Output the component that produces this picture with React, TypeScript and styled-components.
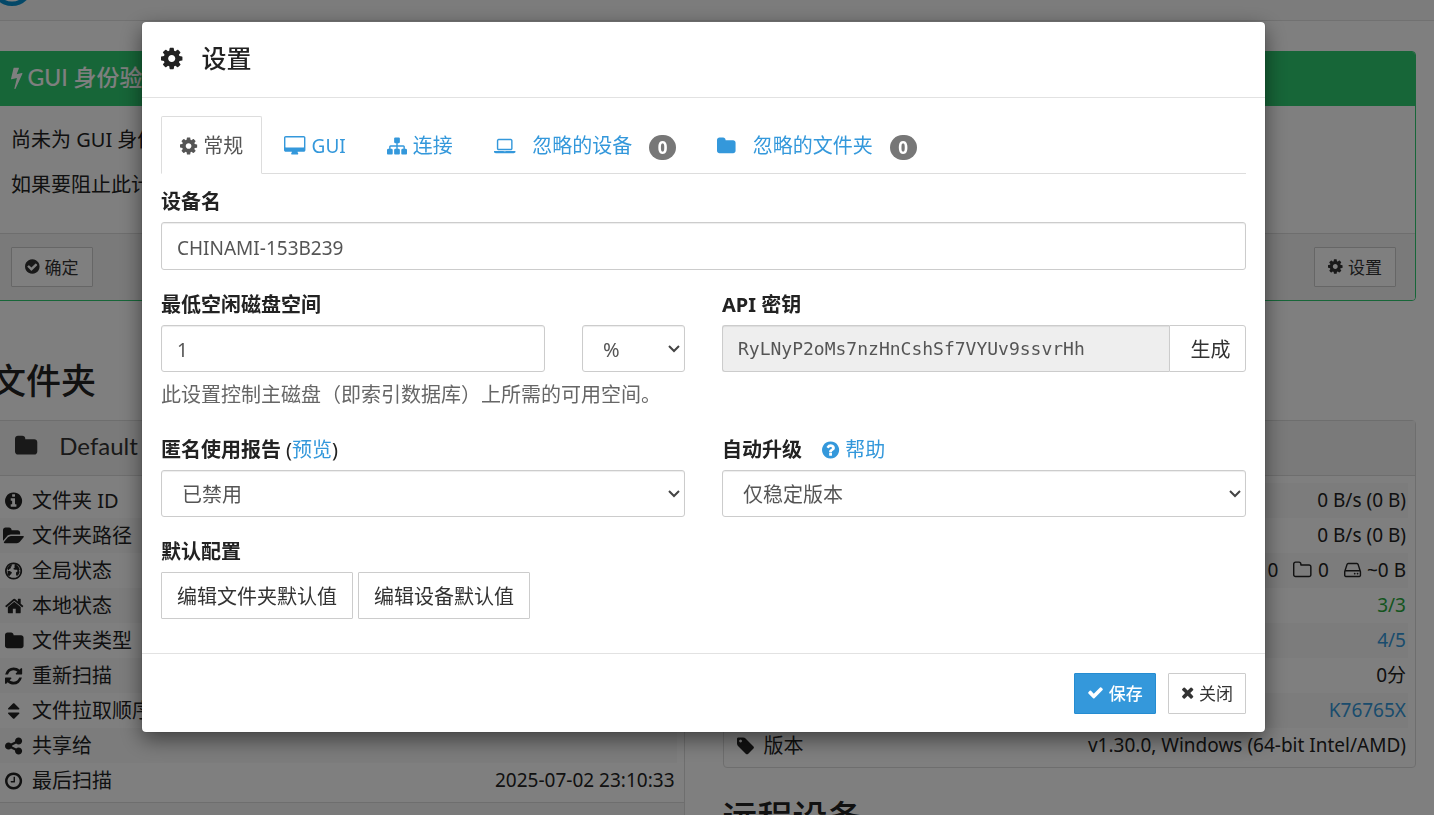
import React from "react";
import styled, { createGlobalStyle } from "styled-components";

const sans = `"Noto Sans", "Noto Sans CJK SC", sans-serif`;
const display = `"Lato", "Noto Sans CJK SC", sans-serif`;

const Global = createGlobalStyle`
  *, *::before, *::after { box-sizing: border-box; }
  html, body { margin: 0; height: 100%; overflow: hidden; }
  body { font: 20px/28px ${sans}; color: #222; background: #fff; }
  h1, h2, h3, p { margin: 0; }
  button, input, select { font-family: inherit; margin: 0; }
`;

/* ---------- icons: y-up glyph outlines on a 1792-unit em ---------- */
const disc = "M1536 640q0 -209 -103 -385.5t-279.5 -279.5t-385.5 -103t-385.5 103t-279.5 279.5t-103 385.5t103 385.5t279.5 279.5t385.5 103t385.5 -103t279.5 -279.5t103 -385.5z";
const folderShape = "M1664 928v-704q0 -92 -66 -158t-158 -66h-1216q-92 0 -158 66t-66 158v960q0 92 66 158t158 66h320q92 0 158 -66t66 -158v-32h672q92 0 158 -66t66 -158z";
const glyphs = {
  cog: [1536, "M1024 640q0 -106 -75 -181t-181 -75t-181 75t-75 181t75 181t181 75t181 -75t75 -181zM1536 749v-222q0 -12 -8 -23t-20 -13l-185 -28q-19 -54 -39 -91q35 -50 107 -138q10 -12 10 -25t-9 -23q-27 -37 -99 -108t-94 -71q-12 0 -26 9l-138 108q-44 -23 -91 -38q-16 -136 -29 -186q-7 -28 -36 -28h-222q-14 0 -24.5 8.5t-11.5 21.5l-28 184q-49 16 -90 37l-141 -107q-10 -9 -25 -9q-14 0 -25 11q-126 114 -165 168q-7 10 -7 23q0 12 8 23q15 21 51 66.5t54 70.5q-27 50 -41 99l-183 27q-13 2 -21 12.5t-8 23.5v222q0 12 8 23t19 13l186 28q14 46 39 92q-40 57 -107 138q-10 12 -10 24q0 10 9 23q26 36 98.5 107.5t94.5 71.5q13 0 26 -10l138 -107q44 23 91 38q16 136 29 186q7 28 36 28h222q14 0 24.5 -8.5t11.5 -21.5l28 -184q49 -16 90 -37l142 107q9 9 24 9q13 0 25 -10q129 -119 165 -170q7 -8 7 -22q0 -12 -8 -23q-15 -21 -51 -66.5t-54 -70.5q26 -50 41 -98l183 -28q13 -2 21 -12.5t8 -23.5z"],
  check: [1792, "M1671 970q0 -40 -28 -68l-724 -724l-136 -136q-28 -28 -68 -28t-68 28l-136 136l-362 362q-28 28 -28 68t28 68l136 136q28 28 68 28t68 -28l294 -295l656 657q28 28 68 28t68 -28l136 -136q28 -28 28 -68z"],
  times: [1408, "M1298 214q0 -40 -28 -68l-136 -136q-28 -28 -68 -28t-68 28l-294 294l-294 -294q-28 -28 -68 -28t-68 28l-136 136q-28 28 -28 68t28 68l294 294l-294 294q-28 28 -28 68t28 68l136 136q28 28 68 28t68 -28l294 -294l294 294q28 28 68 28t68 -28l136 -136q28 -28 28 -68t-28 -68l-294 -294l294 -294q28 -28 28 -68z"],
  folder: [1664, folderShape],
  folderOutline: [1664, "M1536 224v704q0 40 -28 68t-68 28h-704q-40 0 -68 28t-28 68v64q0 40 -28 68t-68 28h-320q-40 0 -68 -28t-28 -68v-960q0 -40 28 -68t68 -28h1216q40 0 68 28t28 68z" + folderShape],
  folderOpen: [1920, "M1879 584q0 -31 -31 -66l-336 -396q-43 -51 -120.5 -86.5t-143.5 -35.5h-1088q-34 0 -60.5 13t-26.5 43q0 31 31 66l336 396q43 51 120.5 86.5t143.5 35.5h1088q34 0 60.5 -13t26.5 -43zM1536 928v-160h-832q-94 0 -197 -47.5t-164 -119.5l-337 -396l-5 -6q0 4 -0.5 12.5t-0.5 12.5v960q0 92 66 158t158 66h320q92 0 158 -66t66 -158v-32h544q92 0 158 -66t66 -158z"],
  home: [1664, "M1408 544v-480q0 -26 -19 -45t-45 -19h-384v384h-256v-384h-384q-26 0 -45 19t-19 45v480q0 1 0.5 3t0.5 3l575 474l575 -474q1 -2 1 -6zM1631 613l-62 -74q-8 -9 -21 -11h-3q-13 0 -21 7l-692 577l-692 -577q-12 -8 -24 -7q-13 2 -21 11l-62 74q-8 10 -7 23.5t11 21.5l719 599q32 26 76 26t76 -26l244 -204v195q0 14 9 23t23 9h192q14 0 23 -9t9 -23v-408l219 -182q10 -8 11 -21.5t-7 -23.5z"],
  refresh: [1536, "M1511 480q0 -5 -1 -7q-64 -268 -268 -434.5t-478 -166.5q-146 0 -282.5 55t-243.5 157l-129 -129q-19 -19 -45 -19t-45 19t-19 45v448q0 26 19 45t45 19h448q26 0 45 -19t19 -45t-19 -45l-137 -137q71 -66 161 -102t187 -36q134 0 250 65t186 179q11 17 53 117q8 23 30 23h192q13 0 22.5 -9.5t9.5 -22.5zM1536 1280v-448q0 -26 -19 -45t-45 -19h-448q-26 0 -45 19t-19 45t19 45l138 138q-148 137 -349 137q-134 0 -250 -65t-186 -179q-11 -17 -53 -117q-8 -23 -30 -23h-199q-13 0 -22.5 9.5t-9.5 22.5v7q65 268 270 434.5t480 166.5q146 0 284 -55.5t245 -156.5l130 129q19 19 45 19t45 -19t19 -45z"],
  sort: [1024, "M1024 448q0 -26 -19 -45l-448 -448q-19 -19 -45 -19t-45 19l-448 448q-19 19 -19 45t19 45t45 19h896q26 0 45 -19t19 -45zM1024 832q0 -26 -19 -45t-45 -19h-896q-26 0 -45 19t-19 45t19 45l448 448q19 19 45 19t45 -19l448 -448q19 -19 19 -45z"],
  share: [1536, "M1216 512q133 0 226.5 -93.5t93.5 -226.5t-93.5 -226.5t-226.5 -93.5t-226.5 93.5t-93.5 226.5q0 12 2 34l-360 180q-92 -86 -218 -86q-133 0 -226.5 93.5t-93.5 226.5t93.5 226.5t226.5 93.5q126 0 218 -86l360 180q-2 22 -2 34q0 133 93.5 226.5t226.5 93.5t226.5 -93.5t93.5 -226.5t-93.5 -226.5t-226.5 -93.5q-126 0 -218 86l-360 -180q2 -22 2 -34t-2 -34l360 -180q92 86 218 86z"],
  clock: [1536, "M896 992v-448q0 -14 -9 -23t-23 -9h-320q-14 0 -23 9t-9 23v64q0 14 9 23t23 9h224v352q0 14 9 23t23 9h64q14 0 23 -9t9 -23zM1312 640q0 148 -73 273t-198 198t-273 73t-273 -73t-198 -198t-73 -273t73 -273t198 -198t273 -73t273 73t198 198t73 273z" + disc],
  info: [1536, "M1024 160v160q0 14 -9 23t-23 9h-96v512q0 14 -9 23t-23 9h-320q-14 0 -23 -9t-9 -23v-160q0 -14 9 -23t23 -9h96v-320h-96q-14 0 -23 -9t-9 -23v-160q0 -14 9 -23t23 -9h448q14 0 23 9t9 23zM896 1056v160q0 14 -9 23t-23 9h-192q-14 0 -23 -9t-9 -23v-160q0 -14 9 -23t23 -9h192q14 0 23 9t9 23z" + disc],
  checkCircle: [1536, "M1284 802q0 28 -18 46l-91 90q-19 19 -45 19t-45 -19l-408 -407l-226 226q-19 19 -45 19t-45 -19l-91 -90q-18 -18 -18 -46q0 -27 18 -45l362 -362q19 -19 45 -19q27 0 46 19l543 543q18 18 18 45z" + disc],
  question: [1536, "M896 160v192q0 14 -9 23t-23 9h-192q-14 0 -23 -9t-9 -23v-192q0 -14 9 -23t23 -9h192q14 0 23 9t9 23zM1152 832q0 88 -55.5 163t-138.5 116t-170 41q-243 0 -371 -213q-15 -24 8 -42l132 -100q7 -6 19 -6q16 0 25 12q53 68 86 92q34 24 86 24q48 0 85.5 -26t37.5 -59q0 -38 -20 -61t-68 -45q-63 -28 -115.5 -86.5t-52.5 -125.5v-36q0 -14 9 -23t23 -9h192q14 0 23 9t9 23q0 19 21.5 49.5t54.5 49.5q32 18 49 28.5t46 35t44.5 48t28 60.5t12.5 81z" + disc],
  globe: [1536, "M1376 640q0 165 -81.500 305t-221.500 222t-305 81.500t-305 -81.500t-221.500 -222t-81.500 -305t81.500 -305t221.500 -222t305 -81.500t305 81.500t221.500 222t81.500 305z" + disc + "M700 1240L560 1180L640 1080L500 1010L540 900L400 830L300 700L250 760L200 900L300 1090L480 1210zM230 660L420 640L620 520L560 380L430 250L400 100L300 200L240 360zM820 1240L900 1180L820 1080L900 980L780 920L760 800L900 760L1080 760L1130 620L1000 520L980 340L1060 180L1220 330L1320 560L1240 660L1320 760L1240 960L1120 1120L960 1220z"],
  desktop: [1920, "M1792 544v832q0 13 -9.5 22.5t-22.5 9.5h-1600q-13 0 -22.5 -9.5t-9.5 -22.5v-832q0 -13 9.5 -22.5t22.5 -9.5h1600q13 0 22.5 9.5t9.5 22.5zM1920 1376v-1088q0 -66 -47 -113t-113 -47h-544q0 -37 16 -77.5t32 -71t16 -43.5q0 -26 -19 -45t-45 -19h-512q-26 0 -45 19t-19 45q0 14 16 44t32 70t16 78h-544q-66 0 -113 47t-47 113v1088q0 66 47 113t113 47h1600q66 0 113 -47t47 -113z"],
  laptop: [1920, "M416 256q-66 0 -113 47t-47 113v704q0 66 47 113t113 47h1088q66 0 113 -47t47 -113v-704q0 -66 -47 -113t-113 -47h-1088zM384 1120v-704q0 -13 9.5 -22.5t22.5 -9.5h1088q13 0 22.5 9.5t9.5 22.5v704q0 13 -9.500 22.5t-22.5 9.5h-1088q-13 0 -22.5 -9.5t-9.5 -22.5zM1760 192h160v-96q0 -40 -47 -68t-113 -28h-1600q-66 0 -113 28t-47 68v96h160h1600zM1040 96q16 0 16 16t-16 16h-160q-16 0 -16 -16t16 -16h160z"],
  sitemap: [1792, "M1792 288v-320q0 -40 -28 -68t-68 -28h-320q-40 0 -68 28t-28 68v320q0 40 28 68t68 28h96v192h-512v-192h96q40 0 68 -28t28 -68v-320q0 -40 -28 -68t-68 -28h-320q-40 0 -68 28t-28 68v320q0 40 28 68t68 28h96v192h-512v-192h96q40 0 68 -28t28 -68v-320q0 -40 -28 -68t-68 -28h-320q-40 0 -68 28t-28 68v320q0 40 28 68t68 28h96v192q0 52 38 90t90 38h512v192h-96q-40 0 -68 28t-28 68v320q0 40 28 68t68 28h320q40 0 68 -28t28 -68v-320q0 -40 -28 -68t-68 -28h-96v-192h512q52 0 90 -38t38 -90v-192h96q40 0 68 -28t28 -68z"],
  tag: [1536, "M448 1088q0 53 -37.5 90.5t-90.5 37.5t-90.5 -37.5t-37.5 -90.5t37.5 -90.5t90.5 -37.5t90.5 37.5t37.5 90.5zM1515 512q0 -53 -37 -90l-491 -492q-39 -37 -91 -37q-53 0 -90 37l-715 716q-38 37 -64.5 101t-26.5 117v416q0 52 38 90t90 38h416q53 0 117 -26.5t102 -64.5l715 -714q37 -39 37 -91z"],
  bolt: [896, "M885 970q18 -20 7 -44l-540 -1157q-13 -25 -42 -25q-4 0 -14 2q-17 5 -25.5 19t-4.5 30l197 808l-406 -101q-4 -1 -12 -1q-18 0 -31 11q-18 15 -13 39l201 825q4 14 16 23t28 9h328q19 0 32 -12.5t13 -29.5q0 -8 -5 -18l-171 -463l396 98q8 2 12 2q19 0 34 -15z"],
  hdd: [1536, "M1040 320q0 -33 -23.5 -56.5t-56.5 -23.5t-56.5 23.5t-23.5 56.5t23.5 56.5t56.5 23.5t56.5 -23.5t23.5 -56.5zM1296 320q0 -33 -23.5 -56.5t-56.5 -23.5t-56.5 23.5t-23.5 56.5t23.5 56.5t56.5 23.5t56.5 -23.5t23.5 -56.5zM1408 160v320q0 13 -9.5 22.5t-22.5 9.5h-1216q-13 0 -22.5 -9.5t-9.5 -22.5v-320q0 -13 9.5 -22.5t22.5 -9.5h1216q13 0 22.5 9.5t9.5 22.5zM178 640h1180l-157 482q-4 13 -16 21.5t-26 8.5h-782q-14 0 -26 -8.5t-16 -21.5zM1536 480v-320q0 -66 -47 -113t-113 -47h-1216q-66 0 -113 47t-47 113v320q0 25 16 75l197 606q17 53 63 86t101 33h782q55 0 101 -33t63 -86l197 -606q16 -50 16 -75z"],
} as const;
type IconName = keyof typeof glyphs;

const Glyph = styled.svg`
  height: 1em;
  width: auto;
  flex: none;
  fill: currentColor;
  overflow: visible;
`;
const Icon = ({ name }: { name: IconName }) => {
  const [w, d] = glyphs[name];
  return (
    <Glyph viewBox={`0 -1536 ${w} 1792`} aria-hidden="true">
      <path d={d} transform="scale(1 -1)" fillRule="evenodd" />
    </Glyph>
  );
};

/* ---------- page behind the dialog ---------- */
const Viewport = styled.div`
  height: 100vh;
  overflow: hidden;
`;
const Page = styled.div`
  margin: -50px 0 0 -9px;
`;
const NavBar = styled.nav`
  height: 71px;
  padding-top: 14px;
  background: #f8f8f8;
  border-bottom: 1px solid #e2e2e2;
`;
const Logo = styled.svg`
  display: block;
  width: 42px;
  height: 42px;
`;
const Content = styled.main`
  padding: 30px 18px 0 0;
`;
const Alert = styled.section`
  border: 1px solid #2ecc71;
  border-radius: 4px;
  overflow: hidden;
`;
const AlertHeading = styled.h3`
  display: flex;
  align-items: center;
  gap: 5px;
  height: 54px;
  padding: 0 19px 4px;
  font: 500 23px/28px ${display};
  color: #fff;
  background: #2ecc71;
`;
const AlertBody = styled.div`
  height: 127px;
  padding: 20px 19px;
  display: flex;
  flex-direction: column;
  gap: 17px;
`;
const AlertFooter = styled.div`
  display: flex;
  justify-content: space-between;
  padding: 13px 19px;
  background: #f5f5f5;
  border-top: 1px solid #ddd;
`;
const Columns = styled.div`
  display: grid;
  grid-template-columns: 1fr 1fr;
  gap: 38px;
`;
const Heading = styled.h2<{ $gap: number }>`
  margin: ${(p) => p.$gap}px 0 20px;
  font: 500 35px/40px ${display};
`;
const Panel = styled.section`
  border: 1px solid #ddd;
  border-radius: 4px;
`;
const PanelHeading = styled.div`
  display: flex;
  align-items: center;
  gap: 22px;
  height: 55px;
  padding: 0 23px 4px;
  font: 24px/28px ${display};
  color: #333;
  background: #f5f5f5;
  border-bottom: 1px solid #ddd;
`;
const PanelBody = styled.div`
  padding: 7px 7px 4px;
`;
const PanelFooter = styled.div`
  height: 60px;
  background: #f5f5f5;
  border-top: 1px solid #ddd;
`;
const InfoTable = styled.table<{ $shade: "odd" | "even" }>`
  width: 100%;
  border-collapse: collapse;
  tr:nth-child(${(p) => p.$shade}) { background: #f8f8f8; }
  th, td { height: 35px; padding: 0 2px; font-weight: 400; white-space: nowrap; }
  th { text-align: left; }
  td { padding-bottom: 2px; text-align: right; font-size: 19px; }
`;
const RowLabel = styled.span`
  display: flex;
  align-items: center;
  gap: 5px;
`;
const IconSlot = styled.span`
  display: flex;
  justify-content: center;
  width: 26px;
`;
const Stats = styled.span`
  display: flex;
  justify-content: flex-end;
  gap: 15px;
`;
const Stat = styled.span`
  display: flex;
  align-items: center;
  gap: 6px;
  svg { font-size: 20px; }
`;
const Good = styled.span`
  color: #29a83c;
`;
const Link = styled.a`
  display: inline-flex;
  align-items: center;
  gap: 6px;
  color: #3498db;
  text-decoration: none;
`;

const InfoRow = ({ icon, label, children }: { icon: IconName; label: string; children?: React.ReactNode }) => (
  <tr>
    <th scope="row">
      <RowLabel><IconSlot><Icon name={icon} /></IconSlot>{label}</RowLabel>
    </th>
    <td>{children}</td>
  </tr>
);

/* ---------- buttons ---------- */
const Button = styled.button<{ $size?: "small" | "footer"; $primary?: boolean }>`
  display: inline-flex;
  align-items: center;
  justify-content: center;
  gap: 5px;
  height: ${(p) => (p.$size === "small" ? 40 : p.$size === "footer" ? 41 : 47)}px;
  padding: 0 ${(p) => (p.$size === "small" ? 13 : p.$size === "footer" ? 12 : 15)}px ${(p) => (p.$size ? 2 : 0)}px;
  font-size: ${(p) => (p.$size ? 17 : 20)}px;
  font-weight: ${(p) => (p.$primary ? 500 : 400)};
  color: ${(p) => (p.$primary ? "#fff" : "#333")};
  background: ${(p) => (p.$primary ? "#3498db" : "#fff")};
  border: 1px solid ${(p) => (p.$primary ? "#258cd1" : "#ccc")};
  border-radius: 1px;
`;

/* ---------- dialog ---------- */
const Backdrop = styled.div`
  position: fixed;
  inset: 0;
  padding: 22px 169px 0 142px;
  background: rgba(0, 0, 0, 0.5);
`;
const Dialog = styled.div`
  background: #fff;
  border-radius: 4px;
  box-shadow: 0 7px 21px rgba(0, 0, 0, 0.5), 0 0 1px rgba(0, 0, 0, 0.6);
`;
const DialogHeader = styled.header`
  display: flex;
  align-items: center;
  gap: 19px;
  height: 76px;
  padding: 0 19px 3px;
  border-bottom: 1px solid #e2e2e2;
  font-size: 25px;
`;
const DialogTitle = styled.h1`
  font: 500 25px/32px ${display};
`;
const DialogBody = styled.form`
  padding: 18px 19px 34px;
`;
const TabList = styled.div`
  display: flex;
  gap: 3px;
  border-bottom: 1px solid #ddd;
  margin-bottom: 12px;
`;
const Tab = styled.button<{ $active?: boolean; $gap?: number }>`
  display: flex;
  align-items: center;
  gap: ${(p) => p.$gap ?? 6}px;
  height: 58px;
  margin-bottom: -1px;
  padding: 2px 18px 0;
  font-size: 20px;
  line-height: 28px;
  color: ${(p) => (p.$active ? "#555" : "#3498db")};
  background: ${(p) => (p.$active ? "#fff" : "transparent")};
  border: 1px solid ${(p) => (p.$active ? "#ddd" : "transparent")};
  border-bottom-color: ${(p) => (p.$active ? "#fff" : "transparent")};
  border-radius: 2px 2px 0 0;
`;
const Latin = styled.span`
  font-size: 19px;
`;
const Badge = styled.span`
  min-width: 27px;
  margin-top: 3px;
  padding: 0 8px;
  border-radius: 13px;
  background: #777;
  color: #fff;
  font-size: 17px;
  font-weight: 700;
  line-height: 25px;
  text-align: center;
`;
const Fields = styled.div`
  display: grid;
  grid-template-columns: 1fr 1fr;
  gap: 0 37px;
`;
const Field = styled.div`
  margin-bottom: 19px;
`;
const LabelRow = styled.div`
  display: flex;
  gap: 5px;
  height: 36px;
  padding-top: 2px;
`;
const Label = styled.label`
  font-weight: 700;
`;
const HelpLink = styled(Link)`
  height: 28px;
  margin-left: 15px;
`;
const Input = styled.input<{ $tall?: boolean }>`
  display: block;
  width: 100%;
  height: ${(p) => (p.$tall ? 48 : 47)}px;
  padding: 3px 15px 0;
  font-size: 19px;
  color: #555;
  background: #fff;
  border: 1px solid #ccc;
  border-radius: 3px;
  box-shadow: inset 0 1px 1px rgba(0, 0, 0, 0.075);
`;
const KeyInput = styled(Input)`
  flex: 1;
  min-width: 0;
  padding-top: 0;
  font: 18px "DejaVu Sans Mono", monospace;
  background: #eee;
  border-right: 0;
  border-radius: 3px 0 0 3px;
`;
const SelectBox = styled.div`
  position: relative;
`;
const SelectInput = styled.select`
  appearance: none;
  display: block;
  width: 100%;
  height: 47px;
  padding: 2px 24px 0 20px;
  font-size: 20px;
  color: #555;
  background: #fff;
  border: 1px solid #ccc;
  border-radius: 3px;
  box-shadow: inset 0 1px 1px rgba(0, 0, 0, 0.075);
`;
const Chevron = styled.svg`
  position: absolute;
  right: 5px;
  top: 19px;
  width: 12px;
  height: 9px;
  fill: none;
  stroke: #444;
  stroke-width: 2;
  pointer-events: none;
`;
const Select = ({ children, ...rest }: React.ComponentProps<"select">) => (
  <SelectBox>
    <SelectInput {...rest}>{children}</SelectInput>
    <Chevron viewBox="0 0 12 9" aria-hidden="true"><path d="M1 2L6 7L11 2" /></Chevron>
  </SelectBox>
);
const SpaceRow = styled.div`
  display: grid;
  grid-template-columns: 1fr 103px;
  gap: 37px;
`;
const InputGroup = styled.div`
  display: flex;
`;
const AddonButton = styled(Button)`
  width: 77px;
  padding: 0 0 0 6px;
  border-radius: 0 3px 3px 0;
`;
const Help = styled.p`
  margin: 9px 0 25px;
  color: #666;
`;
const ButtonRow = styled.div`
  display: flex;
  gap: 5px;
`;
const DialogFooter = styled.footer`
  display: flex;
  justify-content: flex-end;
  gap: 12px;
  padding: 19px 19px 18px;
  border-top: 1px solid #e2e2e2;
`;

export default function App() {
  return (
    <>
      <Global />
      <Viewport>
        <Page>
          <NavBar>
            <Logo viewBox="0 0 42 42" aria-hidden="true">
              <circle cx="21" cy="21" r="21" fill="#0891d1" />
              <circle cx="21" cy="21" r="15" fill="none" stroke="#fff" strokeWidth="3" />
              <circle cx="25" cy="24" r="4" fill="#fff" />
              <path d="M25 24L34 14M25 24L9 26M25 24L29 33" stroke="#fff" strokeWidth="2" />
            </Logo>
          </NavBar>
          <Content>
            <Alert>
              <AlertHeading><Icon name="bolt" />GUI 身份验证</AlertHeading>
              <AlertBody>
                <p>尚未为 GUI 身份验证设置用户名和密码。</p>
                <p>如果要阻止此计算机上的其他用户访问，请考虑进行设置。</p>
              </AlertBody>
              <AlertFooter>
                <Button $size="small" type="button"><Icon name="checkCircle" />确定</Button>
                <Button $size="small" type="button"><Icon name="cog" />设置</Button>
              </AlertFooter>
            </Alert>
            <Columns>
              <div>
                <Heading $gap={59}>文件夹</Heading>
                <Panel>
                  <PanelHeading><Icon name="folder" />Default Folder</PanelHeading>
                  <PanelBody>
                    <InfoTable $shade="even">
                      <tbody>
                        <InfoRow icon="info" label="文件夹 ID" />
                        <InfoRow icon="folderOpen" label="文件夹路径" />
                        <InfoRow icon="globe" label="全局状态" />
                        <InfoRow icon="home" label="本地状态" />
                        <InfoRow icon="folder" label="文件夹类型" />
                        <InfoRow icon="refresh" label="重新扫描" />
                        <InfoRow icon="sort" label="文件拉取顺序" />
                        <InfoRow icon="share" label="共享给" />
                        <InfoRow icon="clock" label="最后扫描">2025-07-02 23:10:33</InfoRow>
                      </tbody>
                    </InfoTable>
                  </PanelBody>
                  <PanelFooter />
                </Panel>
              </div>
              <div>
                <Heading $gap={59}>此设备</Heading>
                <Panel>
                  <PanelHeading />
                  <PanelBody>
                    <InfoTable $shade="odd">
                      <tbody>
                        <InfoRow icon="folder" label="下载速率">0 B/s (0 B)</InfoRow>
                        <InfoRow icon="folder" label="上传速率">0 B/s (0 B)</InfoRow>
                        <InfoRow icon="home" label="本地状态">
                          <Stats>
                            <Stat>0</Stat>
                            <Stat><Icon name="folderOutline" />0</Stat>
                            <Stat><Icon name="hdd" />~0 B</Stat>
                          </Stats>
                        </InfoRow>
                        <InfoRow icon="sitemap" label="监听程序"><Good>3/3</Good></InfoRow>
                        <InfoRow icon="sitemap" label="设备发现"><Link href="#discovery">4/5</Link></InfoRow>
                        <InfoRow icon="clock" label="运行时间">0分</InfoRow>
                        <InfoRow icon="info" label="标识"><Link href="#id">K76765X</Link></InfoRow>
                        <InfoRow icon="tag" label="版本">v1.30.0, Windows (64-bit Intel/AMD)</InfoRow>
                      </tbody>
                    </InfoTable>
                  </PanelBody>
                </Panel>
                <Heading $gap={29}>远程设备</Heading>
              </div>
            </Columns>
          </Content>
        </Page>
      </Viewport>
      <Backdrop>
        <Dialog role="dialog" aria-modal="true" aria-labelledby="dialog-title">
          <DialogHeader>
            <Icon name="cog" />
            <DialogTitle id="dialog-title">设置</DialogTitle>
          </DialogHeader>
          <DialogBody>
            <TabList role="tablist">
              <Tab $active type="button" role="tab" aria-selected="true"><Icon name="cog" />常规</Tab>
              <Tab type="button" role="tab"><Icon name="desktop" /><Latin>GUI</Latin></Tab>
              <Tab type="button" role="tab"><Icon name="sitemap" />连接</Tab>
              <Tab $gap={17} type="button" role="tab"><Icon name="laptop" />忽略的设备<Badge>0</Badge></Tab>
              <Tab $gap={17} type="button" role="tab"><Icon name="folder" />忽略的文件夹<Badge>0</Badge></Tab>
            </TabList>
            <Field>
              <LabelRow><Label htmlFor="device-name">设备名</Label></LabelRow>
              <Input $tall id="device-name" defaultValue="CHINAMI-153B239" />
            </Field>
            <Fields>
              <div>
                <LabelRow><Label htmlFor="min-free">最低空闲磁盘空间</Label></LabelRow>
                <SpaceRow>
                  <Input id="min-free" defaultValue="1" />
                  <Select aria-label="单位"><option>%</option></Select>
                </SpaceRow>
                <Help>此设置控制主磁盘（即索引数据库）上所需的可用空间。</Help>
              </div>
              <div>
                <LabelRow><Label htmlFor="api-key">API 密钥</Label></LabelRow>
                <InputGroup>
                  <KeyInput id="api-key" readOnly value="RyLNyP2oMs7nzHnCshSf7VYUv9ssvrHh" />
                  <AddonButton type="button">生成</AddonButton>
                </InputGroup>
              </div>
              <Field>
                <LabelRow>
                  <Label htmlFor="usage">匿名使用报告</Label>
                  <span>(<Link href="#preview">预览</Link>)</span>
                </LabelRow>
                <Select id="usage"><option>已禁用</option></Select>
              </Field>
              <Field>
                <LabelRow>
                  <Label htmlFor="upgrades">自动升级</Label>
                  <HelpLink href="#help"><Icon name="question" />帮助</HelpLink>
                </LabelRow>
                <Select id="upgrades"><option>仅稳定版本</option></Select>
              </Field>
            </Fields>
            <LabelRow><Label as="span">默认配置</Label></LabelRow>
            <ButtonRow>
              <Button type="button">编辑文件夹默认值</Button>
              <Button type="button">编辑设备默认值</Button>
            </ButtonRow>
          </DialogBody>
          <DialogFooter>
            <Button $size="footer" $primary type="button"><Icon name="check" />保存</Button>
            <Button $size="footer" type="button"><Icon name="times" />关闭</Button>
          </DialogFooter>
        </Dialog>
      </Backdrop>
    </>
  );
}
